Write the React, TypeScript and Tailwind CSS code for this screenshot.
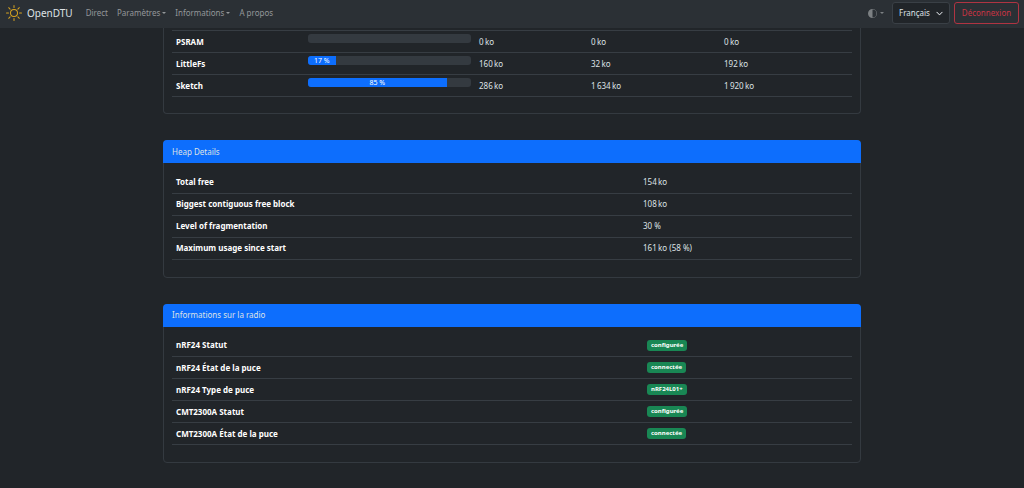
import { useState } from 'react';
import { BsChevronDown, BsCircleHalf, BsSun } from 'react-icons/bs';

type MemoryRow = { type: string; usage: number; free: string; used: string; size: string };

const NNBSP = '\u202f';

const memoryRows: MemoryRow[] = [
  { type: 'PSRAM', usage: 0, free: `0${NNBSP}ko`, used: `0${NNBSP}ko`, size: `0${NNBSP}ko` },
  { type: 'LittleFs', usage: 17, free: `160${NNBSP}ko`, used: `32${NNBSP}ko`, size: `192${NNBSP}ko` },
  { type: 'Sketch', usage: 85, free: `286${NNBSP}ko`, used: `1${NNBSP}634${NNBSP}ko`, size: `1${NNBSP}920${NNBSP}ko` },
];

const heapRows = [
  { label: 'Total free', value: `154${NNBSP}ko` },
  { label: 'Biggest contiguous free block', value: `108${NNBSP}ko` },
  { label: 'Level of fragmentation', value: '30 %' },
  { label: 'Maximum usage since start', value: `161${NNBSP}ko (58 %)` },
];

const radioRows = [
  { label: 'nRF24 Statut', value: 'configurée' },
  { label: 'nRF24 État de la puce', value: 'connectée' },
  { label: 'nRF24 Type de puce', value: 'nRF24L01+' },
  { label: 'CMT2300A Statut', value: 'configurée' },
  { label: 'CMT2300A État de la puce', value: 'connectée' },
];

function Caret() {
  return <span className="border-x-2 border-t-2 border-x-transparent border-t-current" />;
}

function NavBar() {
  const [language, setLanguage] = useState('fr');

  return (
    <nav className="sticky top-0 z-10 flex h-7 items-center bg-[#2b3035] pr-[5px] pb-[2px] pl-1.5 text-[#94979a]">
      <a href="#home" className="flex items-center gap-[5px] text-[10px] text-[#dee2e6]">
        <BsSun className="size-4 text-[#d9a520]" />
        OpenDTU
      </a>
      <div className="ml-[13px] flex items-center gap-[9px]">
        <a href="#live">Direct</a>
        <button type="button" className="flex items-center gap-0.5">
          Paramètres <Caret />
        </button>
        <button type="button" className="flex items-center gap-0.5">
          Informations <Caret />
        </button>
        <a href="#about">A propos</a>
      </div>
      <div className="ml-auto flex items-center">
        <button type="button" aria-label="Thème" className="mr-2 flex items-center gap-[3px] text-[#7c8083]">
          <BsCircleHalf className="size-[9px]" />
          <Caret />
        </button>
        <div className="relative mr-1">
          <select
            aria-label="Langue"
            value={language}
            onChange={(e) => setLanguage(e.target.value)}
            className="block h-[22px] w-[58px] appearance-none rounded-[3px] border border-[#3a4046] bg-[#212529] pl-[6px] text-[#dee2e6]"
          >
            <option value="fr">Français</option>
            <option value="en">English</option>
            <option value="de">Deutsch</option>
          </select>
          <BsChevronDown className="pointer-events-none absolute top-[8px] right-[7px] size-[7px] stroke-1 text-[#dee2e6]" />
        </div>
        <button type="button" className="h-[22px] w-[65px] rounded-[3px] border border-[#b03442] text-[#c93444]">
          Déconnexion
        </button>
      </div>
    </nav>
  );
}

function Card({ title, children }: { title: string; children: React.ReactNode }) {
  return (
    <section className="mt-[26px] rounded-[4px] border border-[#343a40]">
      <h2 className="-mx-px -mt-px flex h-[23px] items-center rounded-t-[4px] bg-[#0d6efd] px-[9px] text-[#dee2e6]">
        {title}
      </h2>
      <div className="px-2 pt-2 pb-[17px]">{children}</div>
    </section>
  );
}

function UsageBar({ value }: { value: number }) {
  return (
    <div className="mb-1.5 h-[9px] overflow-hidden rounded-[3px] bg-[#343a40]">
      <div
        className="h-full overflow-hidden bg-[#0d6efd] text-center text-[7px] leading-[9px] text-white"
        style={{ width: `${value}%` }}
      >
        {value > 0 && `${value} %`}
      </div>
    </div>
  );
}

export default function App() {
  return (
    <div className="min-h-screen bg-[#212529] font-['Noto_Sans','Open_Sans',sans-serif] text-[8px] leading-3 text-[#dee2e6]">
      <NavBar />
      <main className="mx-auto w-full max-w-[698px] pb-6">
        {/* Memory usage, header scrolled away */}
        <section className="rounded-b-[4px] border border-t-0 border-[#343a40] px-2 pt-0.5 pb-4">
          <table className="w-full table-fixed border-t border-[#373d43] text-left">
            <colgroup>
              <col />
              <col className="w-[171px]" />
              <col className="w-[112px]" />
              <col className="w-[133px]" />
              <col className="w-[132px]" />
            </colgroup>
            <tbody>
              {memoryRows.map((row) => (
                <tr key={row.type} className="h-[22px] border-b border-[#373d43]">
                  <th scope="row" className="px-1 font-bold text-white">{row.type}</th>
                  <td className="px-1">
                    <UsageBar value={row.usage} />
                  </td>
                  <td className="px-1">{row.free}</td>
                  <td className="px-1">{row.used}</td>
                  <td className="px-1">{row.size}</td>
                </tr>
              ))}
            </tbody>
          </table>
        </section>

        <Card title="Heap Details">
          <table className="w-full table-fixed text-left">
            <tbody>
              {heapRows.map((row) => (
                <tr key={row.label} className="h-[22px] border-b border-[#373d43]">
                  <th scope="row" className="px-1 font-bold text-white">{row.label}</th>
                  <td className="w-[213px] px-1">{row.value}</td>
                </tr>
              ))}
            </tbody>
          </table>
        </Card>

        <Card title="Informations sur la radio">
          <table className="w-full table-fixed text-left">
            <tbody>
              {radioRows.map((row) => (
                <tr key={row.label} className="h-[22px] border-b border-[#373d43]">
                  <th scope="row" className="px-1 font-bold text-white">{row.label}</th>
                  <td className="w-[209px] px-1">
                    <span className="block h-[11px] w-fit rounded-[3px] bg-[#198754] px-1 text-[6px] leading-[11px] font-bold text-white">
                      {row.value}
                    </span>
                  </td>
                </tr>
              ))}
            </tbody>
          </table>
        </Card>
      </main>
    </div>
  );
}
